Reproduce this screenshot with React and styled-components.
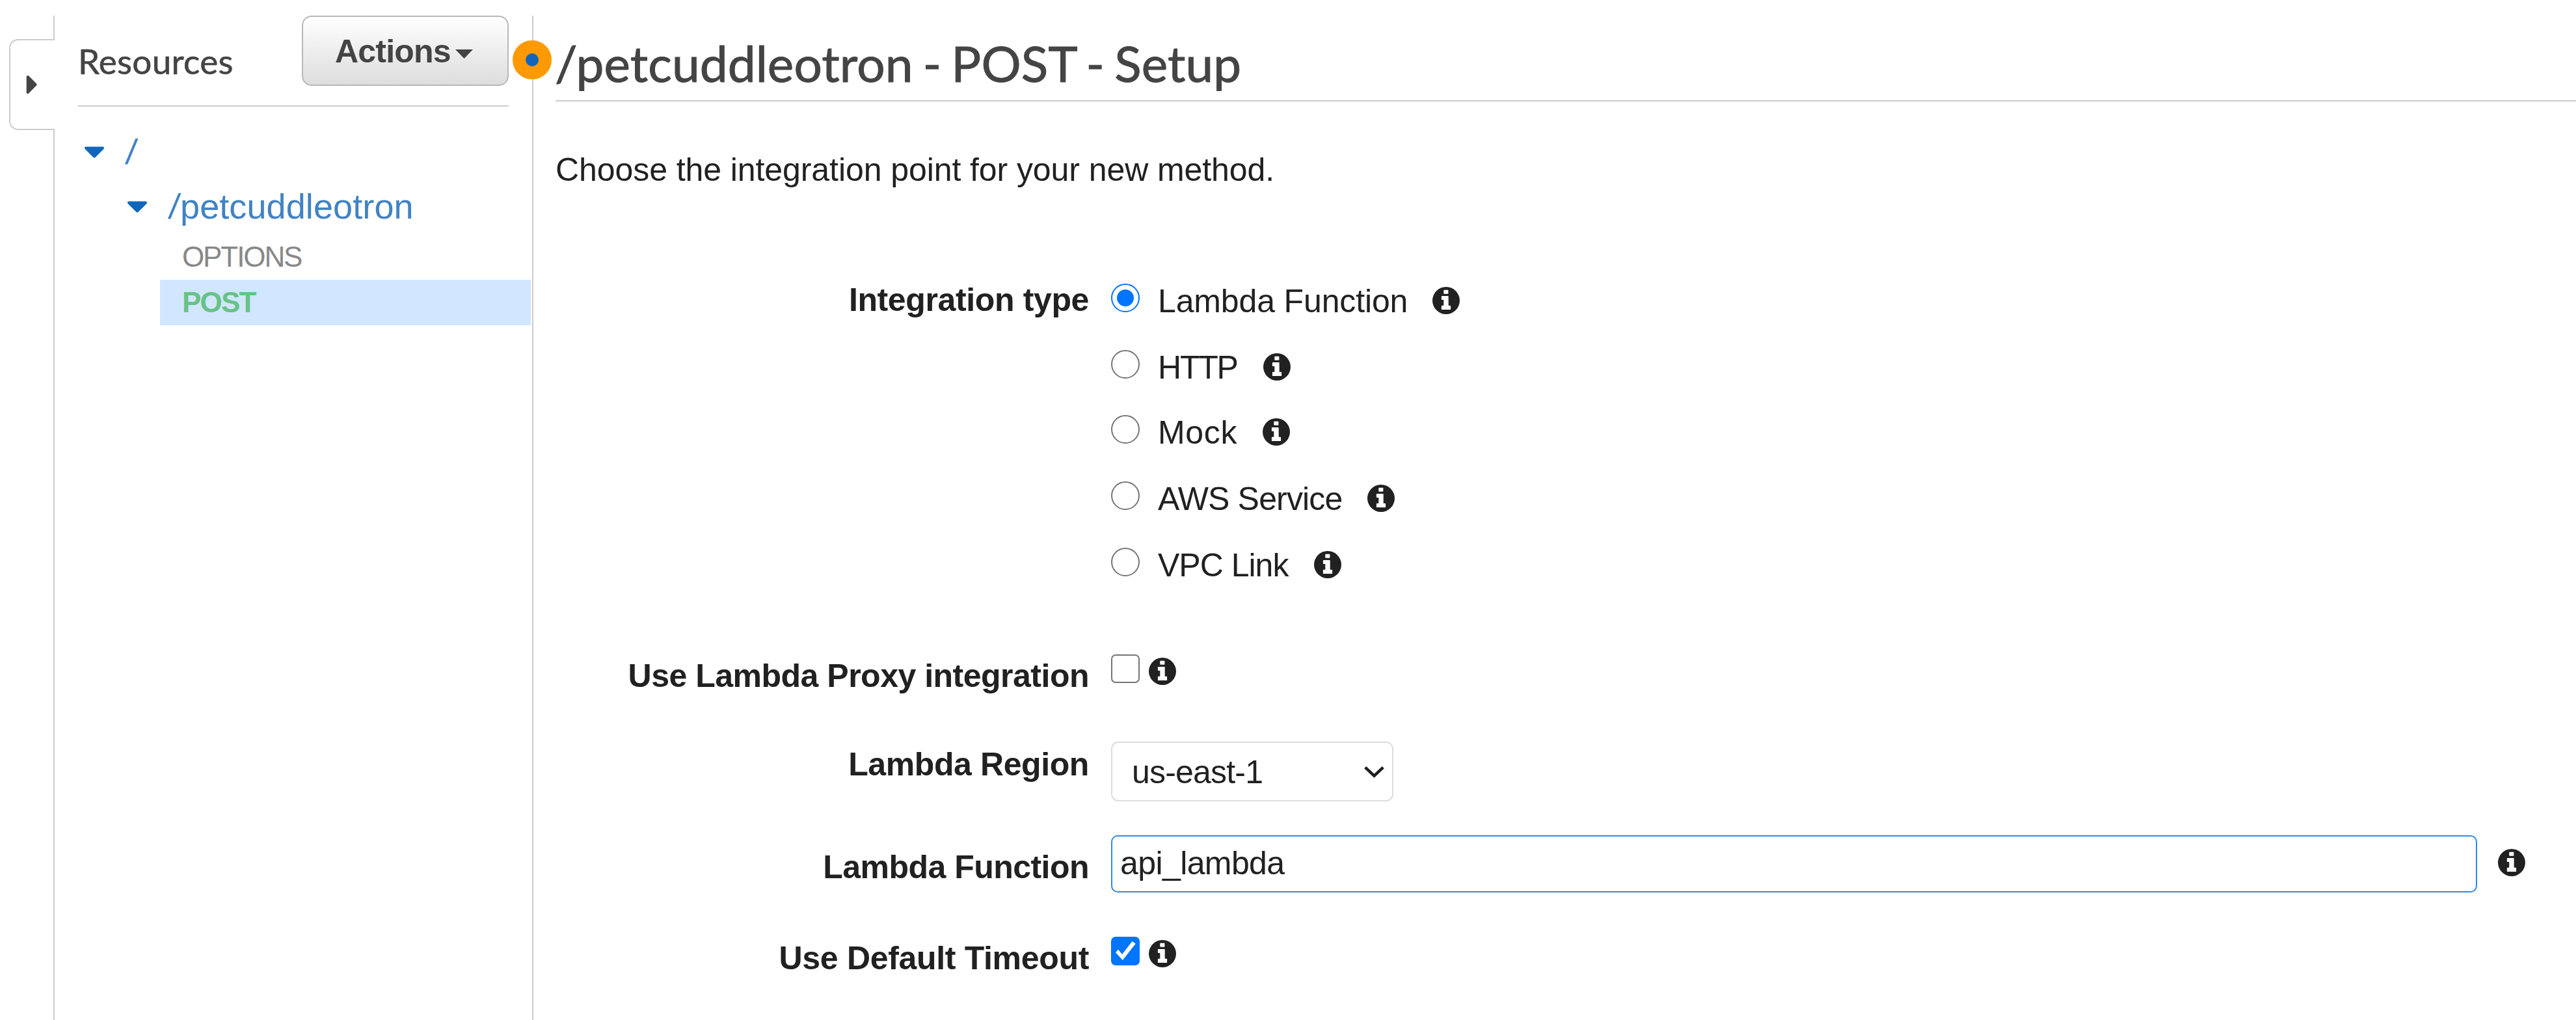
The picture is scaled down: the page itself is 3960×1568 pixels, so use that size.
import React from 'react';
import styled, { createGlobalStyle } from 'styled-components';

const GlobalStyle = createGlobalStyle`
  * { box-sizing: border-box; }
  body {
    margin: 0;
    background: #fff;
    color: #212121;
    font-family: "Liberation Sans", Arial, sans-serif;
    font-size: 50px;
    line-height: 60px;
    overflow: hidden;
  }
  svg { display: block; flex: none; }
`;

const Page = styled.div`
  display: flex;
  width: 3960px;
  height: 1568px;
  padding-top: 24px;
`;

/* Collapsed drawer on the far left */
const Rail = styled.div`
  display: flex;
  flex-direction: column;
  flex: none;
  width: 84px;
`;

const RailEdge = styled.div`
  height: ${(p) => p.$height || 'auto'};
  flex: ${(p) => (p.$height ? 'none' : 1)};
  border-right: 2px solid #ccc;
`;

const DrawerTab = styled.div`
  display: flex;
  align-items: center;
  height: 140px;
  margin-left: 14px;
  padding-left: 24px;
  border: 2px solid #ccc;
  border-right: 0;
  border-radius: 14px 0 0 14px;
`;

/* Resource tree */
const Sidebar = styled.aside`
  flex: none;
  width: 734px;
  padding-left: 36px;
`;

const SidebarHeader = styled.header`
  display: flex;
  justify-content: space-between;
  align-items: flex-start;
  width: 662px;
  height: 140px;
  border-bottom: 2px solid #ccc;
`;

const SidebarTitle = styled.h2`
  margin: 38px 0 0;
  font: 400 53px/64px Lato, sans-serif;
  letter-spacing: 0.3px;
  color: #444;
  -webkit-text-stroke: 0.6px #444;
`;

const ActionsButton = styled.button`
  display: flex;
  align-items: center;
  width: 318px;
  height: 108px;
  padding: 1px 0 0 49px;
  border: 2px solid #b8b8b8;
  border-radius: 15px;
  background: linear-gradient(#fff, #ddd);
  color: #444;
  font: bold 50px/60px "Liberation Sans", Arial, sans-serif;
  letter-spacing: -0.78px;

  svg { margin: 9px 0 0 7px; }
`;

const Tree = styled.div`
  padding-top: 37px;
`;

const Resource = styled.div`
  display: flex;
  align-items: flex-start;
  height: ${(p) => p.$height}px;
  padding-left: ${(p) => p.$indent}px;
  color: #4183c4;
  font-size: 54px;
  line-height: 65px;
  letter-spacing: 0.1px;

  svg { margin: 24px 32px 0 0; }
`;

const Slash = styled.span`
  width: 19px;
  transform: skewX(-8deg);
  transform-origin: left 51px;
`;

const Method = styled.div`
  width: 570px;
  height: 70px;
  margin-left: 126px;
  padding-left: 34px;
  font-size: 44px;
  line-height: 70px;
  font-weight: ${(p) => (p.$selected ? 'bold' : 'normal')};
  letter-spacing: ${(p) => (p.$selected ? '-1.8px' : '-2.1px')};
  color: ${(p) => (p.$selected ? '#67c285' : '#888')};
  background: ${(p) => (p.$selected ? '#d1e7ff' : 'transparent')};
`;

/* Method setup */
const Main = styled.main`
  position: relative;
  flex: 1;
  padding-left: 34px;
  border-left: 2px solid #ccc;
`;

const ResizeHandle = styled.div`
  position: absolute;
  left: -32px;
  top: 38px;
  width: 60px;
  height: 60px;
  border: 20px solid #ff9900;
  border-radius: 50%;
  background: #1166bb;
`;

const Title = styled.h1`
  height: 132px;
  margin: 0;
  padding-top: 27px;
  border-bottom: 2px solid #ccc;
  font: 400 76.5px/90px Lato, sans-serif;
  letter-spacing: 0.14px;
  word-spacing: -4.6px;
  text-indent: -1px;
  color: #444;
  -webkit-text-stroke: 1px #444;
`;

const Intro = styled.p`
  margin: 75px 0 0;
  letter-spacing: -0.08px;
`;

const Field = styled.div`
  display: grid;
  grid-template-columns: 820px 1fr;
  column-gap: 34px;
  height: ${(p) => p.$height}px;
  margin-top: ${(p) => p.$gap}px;
`;

const Label = styled.label`
  padding-top: ${(p) => p.$top}px;
  text-align: right;
  font-weight: bold;
  letter-spacing: ${(p) => p.$track}px;
`;

const Control = styled.div`
  display: flex;
  align-items: flex-start;
`;

const Options = styled.div`
  padding-top: 2px;
`;

const Option = styled.div`
  display: flex;
  align-items: flex-start;
  height: 102px;

  &:nth-child(2) { height: 100px; }
  &:last-child { height: 60px; }
`;

const OptionText = styled.span`
  width: ${(p) => p.$width}px;
  margin: 0 38px 0 28px;
  white-space: nowrap;
  letter-spacing: ${(p) => p.$track}px;
`;

const Radio = styled.span`
  flex: none;
  width: 44px;
  height: 44px;
  margin-top: 3px;
  padding: 7px;
  border: 2px solid ${(p) => (p.$checked ? '#0075ff' : '#767676')};
  border-radius: 50%;
  background: ${(p) => (p.$checked ? '#0075ff' : '#fff')};
  background-clip: content-box;
`;

const Checkbox = styled.span`
  flex: none;
  width: 44px;
  height: 44px;
  border: ${(p) => (p.$checked ? '0' : '2px solid #767676')};
  border-radius: 7px;
  background: ${(p) => (p.$checked ? '#0075ff' : '#fff')};
`;

const InfoSlot = styled.span`
  flex: none;
  margin: ${(p) => p.$top}px 0 0 ${(p) => p.$left || 0}px;
`;

const Select = styled.div`
  display: flex;
  align-items: center;
  justify-content: space-between;
  width: 434px;
  height: 92px;
  padding: 1px 12px 0 30px;
  border: 2px solid #ddd;
  border-radius: 11px;
  letter-spacing: -0.8px;
`;

const TextInput = styled.input`
  width: 2100px;
  height: 88px;
  padding: 0 12px 2px;
  border: 2px solid #3388dd;
  border-radius: 10px;
  outline: 0;
  background: #fff;
  color: #212121;
  font: 50px/60px "Liberation Sans", Arial, sans-serif;
  letter-spacing: -0.6px;
`;

function InfoIcon() {
  return (
    <svg width="42" height="42" viewBox="0 0 42 42">
      <circle cx="21" cy="21" r="21" fill="#212121" />
      <path
        fill="#fff"
        d="M18 4.7h5.7q.7 0 .7.7v4.6q0 .7-.7.7H18q-.7 0-.7-.7V5.4q0-.7.7-.7zM14.6 14h9.4q.7 0 .7.7v14h2.7q.7 0 .7.7v5q0 .7-.7.7H14.6q-.7 0-.7-.7v-5q0-.7.7-.7h2.7V20h-2.7q-.7 0-.7-.7v-4.6q0-.7.7-.7z"
      />
    </svg>
  );
}

function Expanded() {
  return (
    <svg width="30" height="18" viewBox="0 0 30 18">
      <path d="M2 2.5H28L15 15.5Z" fill="#1166bb" stroke="#1166bb" strokeWidth="4" strokeLinejoin="round" />
    </svg>
  );
}

const integrationTypes = [
  { name: 'Lambda Function', width: 384, track: -0.14, checked: true },
  { name: 'HTTP', width: 124, track: -2.2 },
  { name: 'Mock', width: 123, track: 0.7 },
  { name: 'AWS Service', width: 284, track: -0.83 },
  { name: 'VPC Link', width: 202, track: -1 },
];

export default function App() {
  return (
    <>
      <GlobalStyle />
      <Page>
        <Rail>
          <RailEdge $height="36px" />
          <DrawerTab>
            <svg width="17" height="30" viewBox="0 0 17 30">
              <path d="M2.7 3L14.5 15L2.7 27Z" fill="#444" stroke="#444" strokeWidth="4" strokeLinejoin="round" />
            </svg>
          </DrawerTab>
          <RailEdge />
        </Rail>

        <Sidebar>
          <SidebarHeader>
            <SidebarTitle>Resources</SidebarTitle>
            <ActionsButton>
              Actions
              <svg width="27" height="14" viewBox="0 0 27 14">
                <path d="M0 0H27L13.5 14Z" fill="#444" />
              </svg>
            </ActionsButton>
          </SidebarHeader>
          <Tree>
            <Resource $indent={10} $height={84}>
              <Expanded />
              <Slash>/</Slash>
            </Resource>
            <Resource $indent={76} $height={75}>
              <Expanded />
              <Slash>/</Slash>
              <span>petcuddleotron</span>
            </Resource>
            <Method>OPTIONS</Method>
            <Method $selected>POST</Method>
          </Tree>
        </Sidebar>

        <Main>
          <ResizeHandle />
          <Title>/petcuddleotron - POST - Setup</Title>
          <Intro>Choose the integration point for your new method.</Intro>

          <Field $gap={140} $height={468}>
            <Label $top={0} $track={-0.37}>Integration type</Label>
            <Options>
              {integrationTypes.map((t) => (
                <Option key={t.name}>
                  <Radio $checked={t.checked} />
                  <OptionText $width={t.width} $track={t.track}>{t.name}</OptionText>
                  <InfoSlot $top={8}><InfoIcon /></InfoSlot>
                </Option>
              ))}
            </Options>
          </Field>

          <Field $gap={107} $height={64}>
            <Label $top={3} $track={-0.5}>Use Lambda Proxy integration</Label>
            <Control>
              <Checkbox />
              <InfoSlot $top={5} $left={14}><InfoIcon /></InfoSlot>
            </Control>
          </Field>

          <Field $gap={70} $height={92}>
            <Label $top={5} $track={-0.4}>Lambda Region</Label>
            <Control>
              <Select>
                us-east-1
                <svg width="31" height="18" viewBox="0 0 31 18">
                  <path d="M1.7 1.7L15.5 14.7L29.3 1.7" fill="none" stroke="#212121" strokeWidth="4.6" />
                </svg>
              </Select>
            </Control>
          </Field>

          <Field $gap={52} $height={88}>
            <Label $top={19} $track={-0.53}>Lambda Function</Label>
            <Control>
              <TextInput defaultValue="api_lambda" />
              <InfoSlot $top={21} $left={32}><InfoIcon /></InfoSlot>
            </Control>
          </Field>

          <Field $gap={68} $height={64}>
            <Label $top={3} $track={-0.32}>Use Default Timeout</Label>
            <Control>
              <Checkbox $checked>
                <svg width="44" height="44" viewBox="0 0 44 44">
                  <path d="M7 24.3L11 19.7L17 27L32.5 7L37.7 10.7L17.8 36Z" fill="#fff" />
                </svg>
              </Checkbox>
              <InfoSlot $top={5} $left={14}><InfoIcon /></InfoSlot>
            </Control>
          </Field>
        </Main>
      </Page>
    </>
  );
}
